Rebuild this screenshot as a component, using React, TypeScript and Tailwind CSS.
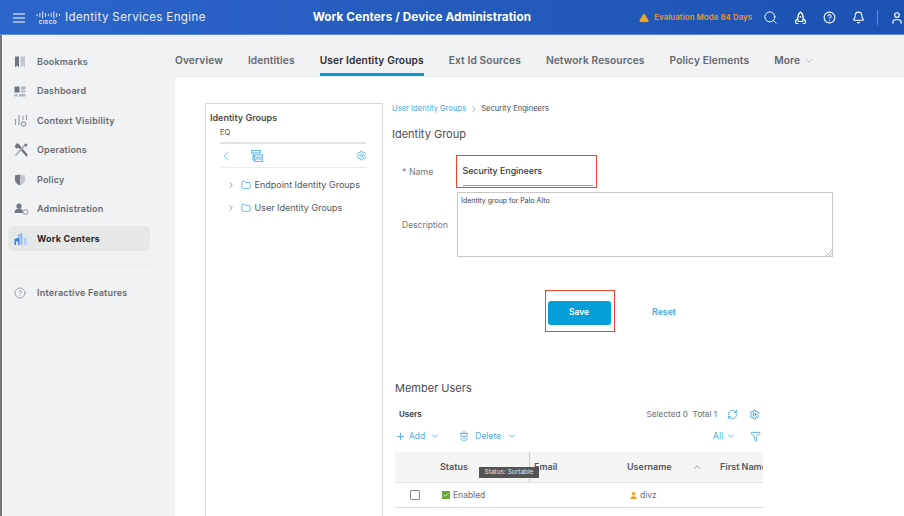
import { ChevronDown, ChevronLeft, ChevronRight, ChevronUp, Filter, Folder, HelpCircle, Plus, RefreshCw, Search, Bell, Settings, Trash2, TriangleAlert, User, Check } from "lucide-react";

const font = { fontFamily: "Inter, sans-serif" };

function CiscoLogo() {
  const bars = [2, 4, 7, 4, 2, 4, 7, 4, 2];
  return (
    <div className="flex flex-col items-center w-[24px]">
      <svg width="24" height="8" viewBox="0 0 24 8">
        {bars.map((h, i) => (
          <rect key={i} x={i * 2.8 + 0.6} y={(8 - h) / 2} width="1" height={h} fill="#dfe8fa" />
        ))}
      </svg>
      <span className="text-[5px] leading-[6px] font-bold tracking-[0.5px] text-[#e6edfb]">CISCO</span>
    </div>
  );
}

function RocketIcon() {
  return (
    <svg width="13" height="14" viewBox="0 0 13 14" fill="none" stroke="#fff" strokeWidth="1.2" strokeLinejoin="round">
      <path d="M6.5 1C4.5 2.5 3.8 5 3.8 7.5l.5 3h4.4l.5-3C9.2 5 8.5 2.5 6.5 1z" />
      <path d="M3.8 7.5L1.5 10l.5 2.5h2.3M9.2 7.5L11.5 10l-.5 2.5H8.7" />
      <circle cx="6.5" cy="5.8" r="0.9" fill="#fff" stroke="none" />
    </svg>
  );
}

function BookmarkIcon() {
  return (
    <svg width="12" height="12" viewBox="0 0 12 12">
      <path d="M1 0.5h4v11L3 9.5 1 11.5z" fill="#6f7580" />
      <path d="M6.5 0.5h4.5v11L8.7 9.5 6.5 11.5z" fill="#c3c7cd" />
    </svg>
  );
}

function DashIcon() {
  return (
    <svg width="12" height="11" viewBox="0 0 12 11">
      <rect x="0.5" y="0.5" width="5" height="6" fill="#6f7580" />
      <rect x="7" y="0.5" width="4.5" height="3" fill="#b0b4bb" />
      <rect x="7" y="4.5" width="4.5" height="2" fill="#b0b4bb" />
      <rect x="0.5" y="8" width="3" height="2.5" fill="#b0b4bb" />
      <rect x="5" y="8" width="6.5" height="2.5" fill="#b0b4bb" />
    </svg>
  );
}

function ContextIcon() {
  return (
    <svg width="14" height="13" viewBox="0 0 14 13" fill="none" stroke="#9a9fa7" strokeWidth="1.2">
      <path d="M1.5 5v6M5 1v10M9 2v4M12.5 1v5" />
      <circle cx="9.5" cy="10" r="2.2" />
    </svg>
  );
}

function ToolsIcon() {
  return (
    <svg width="14" height="14" viewBox="0 0 14 14" fill="none">
      <path d="M3.5 1.5L12.5 12" stroke="#6f7580" strokeWidth="2.4" strokeLinecap="round" />
      <path d="M1 3.5c0-1 .5-2 1.5-2.5l1.5 1.8 1.2-1 .8 2.2-2.5 1.5C2 5.5 1 4.5 1 3.5z" fill="#6f7580" />
      <path d="M11.5 1.5L2 12" stroke="#a8acb3" strokeWidth="1.8" strokeLinecap="round" />
      <path d="M10 1.5l2-1 1.5 1.5-1 2z" fill="#6f7580" />
    </svg>
  );
}

function PolicyIcon() {
  return (
    <svg width="12" height="12" viewBox="0 0 12 12">
      <path d="M6 0.5C4.5 1 2.5 1.3 1 1.3v4.5C1 8.5 3.5 10.7 6 11.5z" fill="#717780" />
      <path d="M6 0.5c1.5.5 3.5.8 5 .8v4.5c0 2.7-2.5 4.9-5 5.7z" fill="#c3c7cd" />
    </svg>
  );
}

function AdminIcon() {
  return (
    <svg width="15" height="12" viewBox="0 0 15 12">
      <circle cx="5" cy="3" r="2.6" fill="#6f7580" />
      <path d="M0.5 10c0-3 2-4.5 4.5-4.5S9 6.5 9 10z" fill="#6f7580" />
      <circle cx="11.5" cy="9" r="2.3" fill="none" stroke="#b0b4bb" strokeWidth="1.4" />
    </svg>
  );
}

function WorkIcon() {
  return (
    <svg width="13" height="12" viewBox="0 0 13 12">
      <path d="M0.5 6l5-1.5V12H4V8.5H2V12H0.5z" fill="#3f7fe8" />
      <path d="M4 4V1.5L8.5 0v12H6.5V4z" fill="#8fb4f0" />
      <rect x="10" y="5" width="2.5" height="7" fill="#b5cdf4" />
    </svg>
  );
}

function TreeIcon() {
  return (
    <svg width="12" height="12" viewBox="0 0 12 12" fill="none" stroke="#52ade0" strokeWidth="0.9">
      <rect x="0.5" y="0.5" width="9" height="2.4" />
      <rect x="3.5" y="4.8" width="8" height="2.4" />
      <rect x="3.5" y="9" width="8" height="2.4" />
      <path d="M2 3v7.2h1.5M2 6h1.5" />
    </svg>
  );
}

const navItems = [
  { label: "Bookmarks", icon: <BookmarkIcon /> },
  { label: "Dashboard", icon: <DashIcon /> },
  { label: "Context Visibility", icon: <ContextIcon /> },
  { label: "Operations", icon: <ToolsIcon /> },
  { label: "Policy", icon: <PolicyIcon /> },
  { label: "Administration", icon: <AdminIcon /> },
];

const tabs = ["Overview", "Identities", "User Identity Groups", "Ext Id Sources", "Network Resources", "Policy Elements"];

export default function App() {
  return (
    <div style={font} className="relative w-[904px] h-[516px] overflow-hidden flex flex-col bg-white">
      {/* Header */}
      <header className="h-[35px] shrink-0 flex items-center bg-gradient-to-r from-[#2c66c9] to-[#1c52b2] border-b border-[#5b8ae0] text-white pl-[13px] pt-[1px]">
        <svg width="12" height="10" viewBox="0 0 12 10" stroke="#fff" strokeWidth="1.2">
          <path d="M0 1h12M0 5h12M0 9h12" />
        </svg>
        <div className="ml-[11px]"><CiscoLogo /></div>
        <span className="ml-[5px] text-[11.6px] tracking-[0.35px] text-[#e8eefb] w-[248px] whitespace-nowrap">Identity Services Engine</span>
        <span className="text-[11.7px] font-bold tracking-[0.1px] w-[327px] whitespace-nowrap">Work Centers / Device Administration</span>
        <TriangleAlert size={10} fill="#f5a623" stroke="#f5a623" />
        <span className="ml-[5px] text-[7.8px] font-semibold text-[#e8962a] w-[101px] tracking-[0.1px] whitespace-nowrap">Evaluation Mode 84 Days</span>
        <Search size={15} strokeWidth={1.5} className="ml-[8px]" />
        <span className="ml-[16px]"><RocketIcon /></span>
        <HelpCircle size={13} className="ml-[16px]" />
        <Bell size={13} className="ml-[16px]" />
        <div className="ml-[12px] w-px h-[15px] bg-[#5b8ae0]" />
        <User size={14} className="ml-[12px] shrink-0" />
      </header>

      <div className="flex flex-1 min-h-0">
        {/* Sidebar */}
        <aside className="w-[175px] shrink-0 bg-[#f1f2f4] border-l-2 border-[#77777a] pt-[14px]">
          <nav className="flex flex-col gap-[4.5px] pl-[6px] pr-[25px]">
            {navItems.map((item) => (
              <div key={item.label} className="flex items-center h-[25px] text-[9px] font-semibold text-[#666a72] tracking-[0.2px]">
                <span className="w-[29px] pl-[6px] flex items-center">{item.icon}</span>
                {item.label}
              </div>
            ))}
            <div className="flex items-center h-[25px] rounded-[5px] bg-[#e6e7e7] text-[9px] font-bold text-[#26282c] tracking-[0.2px]">
              <span className="w-[29px] pl-[6px] flex items-center"><WorkIcon /></span>
              Work Centers
            </div>
          </nav>
          <div className="ml-[6px] mr-[25px] mt-[14px] h-px bg-[#e8e9eb]" />
          <div className="mt-[14px] ml-[6px] flex items-center h-[25px] text-[9px] font-semibold text-[#666a72] tracking-[0.2px]">
            <span className="w-[29px] pl-[6px] flex items-center"><HelpCircle size={12} className="text-[#a0a4ab]" /></span>
            Interactive Features
          </div>
        </aside>

        <main className="flex-1 min-w-0 flex flex-col">
          {/* Tabs */}
          <div className="h-[42px] shrink-0 pt-[10px] bg-[#f1f2f4] border-b border-[#e6e7e9] flex items-stretch gap-[25px] text-[10.2px] font-semibold text-[#63676e] tracking-[0.12px] whitespace-nowrap">
            {tabs.map((t) => (
              <div
                key={t}
                className={t === "User Identity Groups" ? "flex items-center border-b-[3px] border-[#049fd9] pt-[3px] text-[#2b2d31]" : "flex items-center"}
              >
                {t}
              </div>
            ))}
            <div className="flex items-center gap-[4px]">
              More <ChevronDown size={10} className="text-[#a8abb0]" />
            </div>
          </div>

          {/* Content */}
          <div className="flex-1 min-h-0 flex pl-[30px] pt-[26px] gap-[9px] overflow-hidden">
            {/* Tree panel */}
            <section className="w-[178px] h-[440px] shrink-0 border border-[#d8d8d8] px-[4px] pt-[8px]">
              <h3 className="text-[9px] font-semibold text-[#4a4c50] leading-[11px]">Identity Groups</h3>
              <div className="ml-[10px] mt-[3px] h-[14px] w-[146px] text-[7.5px] text-[#555] leading-[14px] border-b-2 border-[#e2e2e2] box-content pb-[2px]">EQ</div>
              <div className="ml-[10px] w-[147px] h-[24px] flex items-center border-b border-[#ececec] text-[#62b8e6]">
                <ChevronLeft size={14} strokeWidth={1.5} className="-ml-[1px]" />
                <span className="ml-[18px] flex"><TreeIcon /></span>
                <Settings size={11} className="ml-auto" />
              </div>
              <div className="mt-[5px] ml-[16px] flex items-center h-[23px] text-[9px] text-[#55585d] whitespace-nowrap">
                <ChevronRight size={10} className="text-[#888]" />
                <Folder size={10} className="ml-[5px] text-[#52ade0]" />
                <span className="ml-[3.5px]">Endpoint Identity Groups</span>
              </div>
              <div className="ml-[16px] flex items-center h-[23px] text-[9px] text-[#55585d] whitespace-nowrap">
                <ChevronRight size={10} className="text-[#888]" />
                <Folder size={10} className="ml-[5px] text-[#52ade0]" />
                <span className="ml-[3.5px]">User Identity Groups</span>
              </div>
            </section>

            {/* Form */}
            <section className="w-[441px] shrink-0 text-[#55585d]">
              <div className="flex items-center h-[11px] text-[7.6px] whitespace-nowrap">
                <span className="text-[#49a8dc]">User Identity Groups</span>
                <ChevronRight size={10} strokeWidth={1.5} className="mx-[2.5px] text-[#777]" />
                <span className="text-[#4a4c50]">Security Engineers</span>
              </div>
              <h2 className="mt-[13px] text-[11px] leading-[14px] text-[#4a4c50]">Identity Group</h2>

              <div className="mt-[14px] flex items-center h-[33px]">
                <label className="w-[64px] pl-[10px] text-[8.8px] text-[#777]">* Name</label>
                <div className="w-[141px] h-[33px] border-[1.5px] border-[#f0412a] pl-[5.5px] flex">
                  <div className="w-[130px] h-[30px] border-b border-[#52ade0] flex items-center text-[8.8px] font-medium text-[#35373b] leading-[30px] whitespace-nowrap">Security Engineers</div>
                </div>
              </div>

              <div className="mt-[4px] flex items-center">
                <label className="w-[65px] text-[8.5px] text-[#777] pl-[10px] pt-[2px]">Description</label>
                <div className="relative w-[376px] h-[65px] border border-[#c8c8c8] pl-[3px] pt-[1.5px] text-[7px] leading-[11px] text-[#3c3e42]">
                  Identity group for Palo Alto
                  <svg className="absolute right-0 bottom-0" width="6" height="6" viewBox="0 0 6 6" stroke="#999" strokeWidth="0.7">
                    <path d="M0 6L6 0M3 6L6 3" />
                  </svg>
                </div>
              </div>

              <div className="mt-[33px] ml-[153px] flex items-center">
                <div className="w-[70px] h-[42px] border-[1.5px] border-[#f0412a] flex items-center pl-[1.5px] pt-[3px]">
                  <button className="w-[63px] h-[24px] rounded-[3px] bg-[#049fd9] text-white text-[8.5px] font-semibold">Save</button>
                </div>
                <span className="ml-[37px] pt-[2px] text-[8.8px] font-semibold text-[#49a8dc]">Reset</span>
              </div>

              <h2 className="mt-[49px] ml-[3px] text-[11px] leading-[14px] text-[#4a4c50]">Member Users</h2>

              <div className="mt-[12px] ml-[3px] w-[368px]">
                <div className="flex items-center h-[14px] pl-[4px]">
                  <span className="text-[8px] font-bold text-[#4a4c50]">Users</span>
                  <span className="ml-auto text-[8.2px] text-[#6a6d72]">Selected 0&nbsp;&nbsp;Total 1</span>
                  <RefreshCw size={11} className="ml-[10px] text-[#52ade0]" />
                  <Settings size={11} className="ml-[11px] mr-[3px] text-[#2f9fd8]" />
                </div>
                <div className="mt-[5px] flex items-center h-[20px] text-[8.5px] text-[#52ade0]">
                  <Plus size={11} />
                  <span className="ml-[3px]">Add</span>
                  <ChevronDown size={10} className="ml-[5px]" />
                  <Trash2 size={10} className="ml-[19px]" />
                  <span className="ml-[6px]">Delete</span>
                  <ChevronDown size={10} className="ml-[6px]" />
                  <span className="ml-auto">All</span>
                  <ChevronDown size={10} className="ml-[3px]" />
                  <Filter size={11} className="ml-[14px] mr-[2px]" />
                </div>
                <div className="relative mt-[6px] h-[31px] bg-[#f5f5f5] border-b border-[#e2e2e2] flex items-center text-[9px] font-semibold text-[#55585d] overflow-hidden">
                  <span className="ml-[45px] w-[94px] shrink-0">Status</span>
                  <span className="w-[93px] shrink-0">Email</span>
                  <span className="w-[65px] shrink-0">Username</span>
                  <ChevronUp size={10} className="text-[#888] shrink-0" />
                  <span className="ml-[18px] shrink-0 whitespace-nowrap">First Name</span>
                  <div className="absolute left-[134px] top-0 h-[30px] w-px bg-[#c8c8c8]" />
                </div>
                <div className="h-[25px] border-b border-[#dedede] flex items-center text-[8.5px] text-[#6a6d72]">
                  <span className="ml-[15px] w-[10px] h-[10px] border border-[#8a8a8a] rounded-[1px]" />
                  <span className="ml-[22px] w-[8px] h-[8px] bg-[#6ca83a] flex items-center justify-center"><Check size={6} className="text-white" strokeWidth={3} /></span>
                  <span className="ml-[3px] w-[85px]">Enabled</span>
                  <span className="ml-[91px] w-[9px] flex"><User size={9} className="text-[#e8a23a]" fill="#e8a23a" /></span>
                  <span className="ml-[2px]">divz</span>
                </div>
              </div>
            </section>
          </div>
        </main>
      </div>
      {/* Tooltip */}
      <div className="absolute left-[479px] top-[467px] w-[60px] h-[11px] bg-[#545454] text-[#e8e8e8] text-[6.5px] leading-[11px] text-center">Status: Sortable</div>
    </div>
  );
}
